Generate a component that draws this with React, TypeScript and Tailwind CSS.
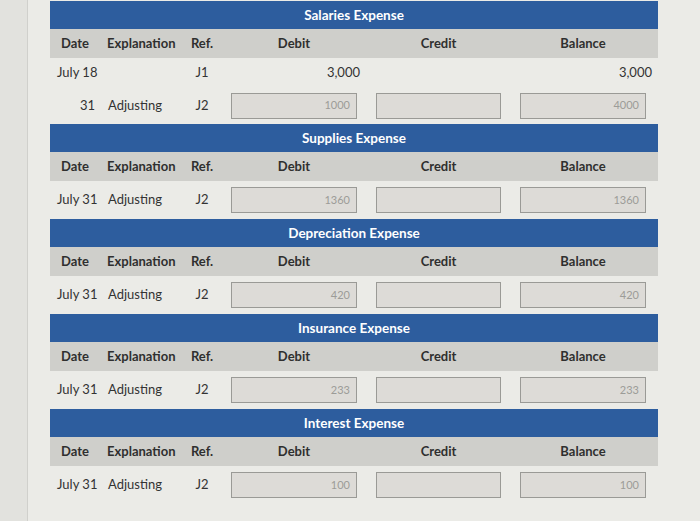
const font = { fontFamily: 'Lato, "Open Sans", sans-serif' };

interface Entry {
  date: string;
  dateAlign?: 'left' | 'right';
  explanation: string;
  ref: string;
  debit?: string;
  balance?: string;
  input?: { debit: string; credit: string; balance: string };
}

interface Account {
  title: string;
  rows: Entry[];
}

const accounts: Account[] = [
  {
    title: 'Salaries Expense',
    rows: [
      { date: 'July 18', explanation: '', ref: 'J1', debit: '3,000', balance: '3,000' },
      {
        date: '31',
        dateAlign: 'right',
        explanation: 'Adjusting',
        ref: 'J2',
        input: { debit: '1000', credit: '', balance: '4000' },
      },
    ],
  },
  {
    title: 'Supplies Expense',
    rows: [{ date: 'July 31', explanation: 'Adjusting', ref: 'J2', input: { debit: '1360', credit: '', balance: '1360' } }],
  },
  {
    title: 'Depreciation Expense',
    rows: [{ date: 'July 31', explanation: 'Adjusting', ref: 'J2', input: { debit: '420', credit: '', balance: '420' } }],
  },
  {
    title: 'Insurance Expense',
    rows: [{ date: 'July 31', explanation: 'Adjusting', ref: 'J2', input: { debit: '233', credit: '', balance: '233' } }],
  },
  {
    title: 'Interest Expense',
    rows: [{ date: 'July 31', explanation: 'Adjusting', ref: 'J2', input: { debit: '100', credit: '', balance: '100' } }],
  },
];

function Box({ value }: { value: string }) {
  return (
    <div className="h-[26px] w-full border border-[#9a9a96] bg-[#dddbd7] flex items-center justify-end pr-[6px] text-[11px] text-[#9c9c98]">
      {value}
    </div>
  );
}

function HeaderRow() {
  return (
    <div className="h-[29px] bg-[#cfcfcb] flex items-center text-[13px] font-bold text-[#2f2f2f]">
      <div className="w-[50px] text-center">Date</div>
      <div className="w-[78px] pl-[7px]">Explanation</div>
      <div className="w-[48px] text-center">Ref.</div>
      <div className="ml-[5px] w-[126px] text-center">Debit</div>
      <div className="ml-[19px] w-[125px] text-center">Credit</div>
      <div className="ml-[19px] w-[126px] text-center">Balance</div>
    </div>
  );
}

function EntryRow({ row, height }: { row: Entry; height: string }) {
  return (
    <div className={`flex items-center text-[13px] text-[#333] ${height}`}>
      <div className={`w-[50px] ${row.dateAlign === 'right' ? 'text-right pr-[5px]' : 'pl-[7px] whitespace-nowrap'}`}>
        {row.date}
      </div>
      <div className="w-[78px] pl-[8px]">{row.explanation}</div>
      <div className="w-[48px] text-center">{row.ref}</div>
      {row.input ? (
        <>
          <div className="ml-[5px] w-[126px]">
            <Box value={row.input.debit} />
          </div>
          <div className="ml-[19px] w-[125px]">
            <Box value={row.input.credit} />
          </div>
          <div className="ml-[19px] w-[126px]">
            <Box value={row.input.balance} />
          </div>
        </>
      ) : (
        <>
          <div className="ml-[5px] w-[129px] text-right">{row.debit}</div>
          <div className="ml-[19px] w-[125px]" />
          <div className="ml-[16px] w-[132px] text-right">{row.balance}</div>
        </>
      )}
    </div>
  );
}

function AccountTable({ account }: { account: Account }) {
  const multi = account.rows.length > 1;
  return (
    <div>
      <div className="h-[28px] bg-[#2d5d9e] flex items-center justify-center text-[13.5px] font-bold text-white">
        {account.title}
      </div>
      <HeaderRow />
      {account.rows.map((r, i) => (
        <EntryRow
          key={i}
          row={r}
          height={multi ? (i === 0 ? 'h-[29px]' : 'h-[37px]') : 'h-[38px]'}
        />
      ))}
    </div>
  );
}

export default function App() {
  return (
    <div className="w-[700px] h-[521px] overflow-hidden flex bg-[#ebebe7]" style={font}>
      <div className="w-[28px] bg-[#e2e2de] border-r border-[#d0d0cc]" />
      <div className="flex-1 pl-[22px] pr-[42px] pt-[1px]">
        {accounts.map((a) => (
          <AccountTable key={a.title} account={a} />
        ))}
      </div>
    </div>
  );
}
